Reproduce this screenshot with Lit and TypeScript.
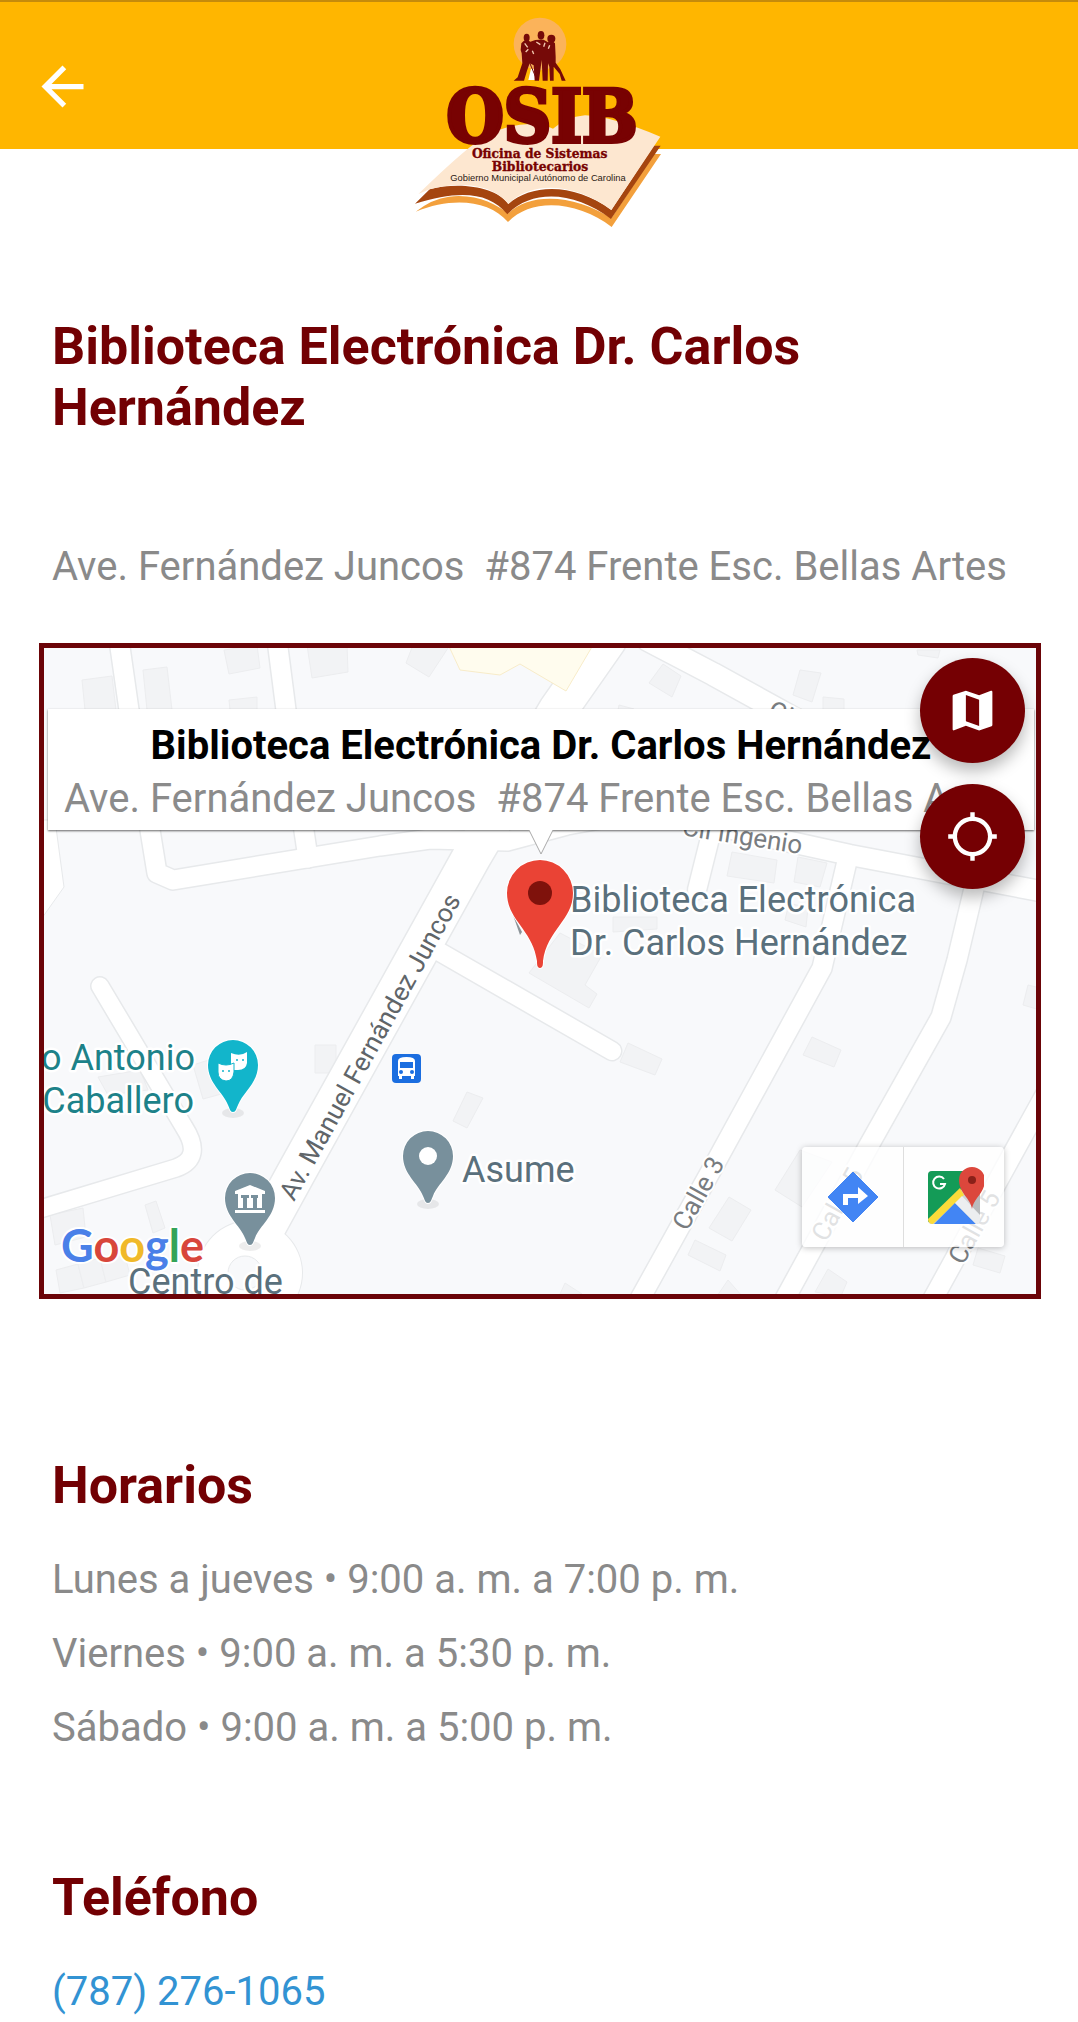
import { LitElement, html, svg, css } from "lit";
import { customElement, property } from "lit/decorators.js";

const PLACE = "Biblioteca Electrónica Dr. Carlos Hernández";
const ADDRESS = "Ave. Fernández Juncos\u00a0 #874 Frente Esc. Bellas Artes";
const HOURS = [
  "Lunes a jueves • 9:00 a. m. a 7:00 p. m.",
  "Viernes • 9:00 a. m. a 5:30 p. m.",
  "Sábado • 9:00 a. m. a 5:00 p. m.",
];

/* Street centre lines with their widths, in map units. */
const ROADS: Array<[string, number]> = [
  ["M119 640 L129 710 L150 830 L157 873 L173 880 L380 846 L430 839 L507 841 L567 825 L640 812", 19],
  ["M277 640 L286 710 L308 858", 19],
  ["M607 640 L558 710 L472 856 L296 1173 L262 1235", 38],
  ["M438 951 L612 1051", 18],
  ["M100 986 L184 1127 Q204 1158 176 1168 L30 1212", 17],
  ["M648 640 L713 674 L800 722", 22],
  ["M640 812 L700 822 L850 855 L1045 892", 20],
  ["M714 822 L697 890", 18],
  ["M848 857 L822 968 L717 1160 L636 1306", 19],
  ["M976 880 L957 960 L941 1017 L868 1147 L781 1306", 19],
  ["M1050 1086 L929 1306", 19],
];

const BUILDINGS = [
  "82,680 112,676 116,710 85,710",
  "143,670 167,667 172,710 147,710",
  "224,650 257,645 260,668 229,674",
  "229,700 257,697 257,710 230,710",
  "307,645 347,645 348,672 312,678",
  "413,645 450,645 429,677 406,663",
  "663,664 681,676 672,697 649,683",
  "800,670 821,673 812,702 793,695",
  "823,697 844,699 844,710 823,710",
  "917,650 940,650 938,658 918,655",
  "619,705 634,709 634,715 617,715",
  "732,852 777,860 774,883 727,876",
  "798,857 827,863 820,887 794,882",
  "789,903 808,908 806,927 785,920",
  "613,917 657,917 657,929 613,932",
  "560,933 602,955 585,985 597,994 589,1008 529,973",
  "628,1043 662,1059 655,1075 620,1062",
  "467,1092 483,1098 467,1128 453,1121",
  "695,1240 726,1255 720,1271 688,1255",
  "565,1283 582,1294 560,1294",
  "729,1197 751,1210 732,1241 709,1228",
  "812,1037 841,1050 834,1067 803,1055",
  "800,1150 832,1162 802,1207 775,1190",
  "828,1269 847,1282 841,1296 815,1292",
  "978,1248 1005,1256 1000,1273 973,1265",
  "1028,985 1040,988 1040,1010 1023,1005",
  "728,1280 742,1296 717,1296",
  "315,1045 336,1045 336,1073 315,1073",
  "193,1065 215,1058 225,1093 203,1099",
  "98,1077 140,1070 148,1090 108,1095",
  "50,1215 83,1208 86,1237 55,1245",
  "145,1205 156,1201 165,1228 153,1233",
  "56,1270 78,1264 84,1288 60,1293",
  "78,1264 100,1258 106,1282 84,1288",
  "100,1258 124,1252 130,1275 106,1282",
];

@customElement("osib-logo")
export class OsibLogo extends LitElement {
  static styles = css`
    :host {
      display: block;
    }
    .art {
      display: block;
      width: 280px;
      height: 240px;
    }
    .name,
    .office {
      font-family: "DejaVu Serif Condensed", "DejaVu Serif", serif;
      font-weight: 700;
      fill: #780202;
      stroke: #780202;
      stroke-linejoin: miter;
      text-anchor: middle;
    }
    .name {
      font-size: 219px;
      stroke-width: 12px;
    }
    .office {
      font-size: 41px;
      stroke-width: 1px;
    }
    .town {
      font: 28px "Liberation Sans", Arial, sans-serif;
      fill: #2b1a14;
      text-anchor: middle;
    }
  `;

  render() {
    return html`
      <svg class="art" viewBox="0 0 840 720" role="img" aria-label="OSIB">
        <path d="M50 635 Q100 596 150 590 C230 580 290 612 328 640 C400 570 540 590 637 655 L765 462 L786 462 L638 681 C540 605 400 590 327 666 C270 600 160 590 50 635Z" fill="#f3a03c" />
        <path d="M48 611 L92 568 C180 545 290 560 328 612 C400 548 530 550 637 630 L764 437 L785 437 L636 657 C530 575 400 565 325 643 C270 575 180 570 48 611Z" fill="#a5450f" />
        <path d="M58 582 Q150 492 214 440 Q280 392 330 380 Q410 362 462 386 Q500 352 558 346 Q640 350 784 410 L637 630 C530 550 400 540 328 612 C280 548 170 545 92 568 Z" fill="#fde7d0" />
        <circle cx="423" cy="132" r="79" fill="#fbb35a" />
        <path d="M388 240 L396 206 L405 208 L414 240Z" fill="#fff" />
        <g fill="#760a08">
          <ellipse cx="383" cy="113" rx="9" ry="12" />
          <ellipse cx="426" cy="106" rx="10" ry="13" />
          <ellipse cx="457" cy="116" rx="12" ry="12" />
          <path d="M374 123 Q384 118 394 125 L409 120 L420 119 L434 119 L447 127 Q460 120 468 130 L470 170 L470 188 L484 208 L500 242 L488 242 L482 222 L464 200 L464 242 L453 242 L451 200 L447 190 L446 242 L431 242 L428 180 L420 242 L407 242 L404 196 L392 190 L384 212 L375 242 L344 242 L356 232 L370 190 L368 160 L365 150 L367 130Z" />
          <path d="M390 184 L413 238" stroke="#760a08" stroke-width="3" />
        </g>
        <path d="M377 130 L386 142 M412 126 L424 134 M380 156 L388 148 M400 152 L404 162 M438 128 L434 140 M452 136 L448 146" stroke="#f2c9b0" stroke-width="4" fill="none" />
        <text class="name" x="429" y="425">OSIB</text>
        <text class="office" x="422" y="475">Oficina de Sistemas</text>
        <text class="office" x="423" y="513">Bibliotecarios</text>
        <text class="town" x="417" y="542">Gobierno Municipal Autónomo de Carolina</text>
      </svg>
    `;
  }
}

@customElement("place-map")
export class PlaceMap extends LitElement {
  @property() name = "";
  @property() address = "";

  static styles = css`
    :host {
      display: block;
      position: relative;
      overflow: hidden;
      border: 5px solid #6b0408;
      background: #f8f9fb;
    }
    .ground {
      display: block;
      width: 100%;
      height: 646px;
    }
    .casing,
    .road {
      fill: none;
      stroke-linecap: round;
      stroke-linejoin: round;
    }
    .casing {
      stroke: #e7e9eb;
    }
    .road {
      stroke: #fff;
    }
    .building {
      fill: #f2f3f5;
      stroke: #ecedef;
    }
    .poi,
    .street {
      font-family: Roboto, sans-serif;
      stroke: #fff;
      stroke-linejoin: round;
      paint-order: stroke;
    }
    .poi {
      font-size: 36px;
      fill: #5a707c;
      stroke-width: 5px;
    }
    .teal {
      fill: #1d8289;
    }
    .street {
      font-size: 26px;
      fill: #787c80;
      stroke-width: 4px;
    }
    .dark {
      fill: #606569;
    }
    .google {
      font: 700 45px Lato, sans-serif;
      stroke: #fff;
      stroke-width: 4px;
      stroke-linejoin: round;
      paint-order: stroke;
    }
    .callout {
      position: absolute;
      top: 61px;
      left: 4px;
      right: 2px;
      display: flex;
      flex-direction: column;
      align-items: center;
      gap: 6px;
      padding: 13px 0 8px;
      background: #fff;
      box-shadow: 0 1px 2px rgba(0, 0, 0, 0.6);
      font: 40px/47px Roboto, sans-serif;
      color: #8b8b8b;
      white-space: nowrap;
    }
    .title {
      font-weight: 700;
      color: #000;
    }
    .snippet {
      align-self: stretch;
      margin: 0 34px 0 16px;
      overflow: hidden;
      text-overflow: ellipsis;
    }
    .tail {
      position: absolute;
      top: 100%;
      left: 50%;
      width: 26px;
      height: 25px;
      margin-left: -13px;
    }
    .actions {
      position: absolute;
      top: 10px;
      right: 11px;
      display: flex;
      flex-direction: column;
      gap: 21px;
    }
    .round {
      display: grid;
      place-items: center;
      width: 105px;
      height: 105px;
      padding: 0;
      border: 0;
      border-radius: 50%;
      background: #750003;
      box-shadow: 0 8px 16px rgba(0, 0, 0, 0.28);
    }
    .round svg {
      width: 53px;
      height: 53px;
      fill: #fff;
    }
    .toolbar {
      position: absolute;
      right: 32px;
      bottom: 47px;
      display: flex;
      border-radius: 4px;
      background: rgba(255, 255, 255, 0.78);
      box-shadow: 0 1px 6px rgba(0, 0, 0, 0.25);
    }
    .tool {
      display: grid;
      place-items: center;
      width: 101px;
      height: 100px;
      padding: 0;
      border: 0;
      background: none;
    }
    .tool + .tool {
      border-left: 1px solid #dedede;
    }
    .tool svg {
      width: 60px;
      height: 60px;
    }
  `;

  private pin(x: number, y: number, color: string) {
    return svg`
      <g transform="translate(${x} ${y})">
        <ellipse cx="0" cy="48" rx="11" ry="5" fill="#000" opacity=".07" />
        <path d="M0 47 C-3 47 -3 44 -5 40 C-10 27 -25 18 -25 0 A25 25 0 0 1 25 0 C25 18 10 27 5 40 C3 44 3 47 0 47Z" fill=${color} stroke="#fff" stroke-width="2" paint-order="stroke" />
      </g>`;
  }

  render() {
    return html`
      <svg class="ground" viewBox="44 648 992 646" preserveAspectRatio="xMidYMid slice" role="img" aria-label="Mapa">
        <rect x="-2000" y="0" width="6000" height="3000" fill="#f8f9fb" />
        ${BUILDINGS.map((p) => svg`<polygon class="building" points=${p} />`)}
        ${ROADS.map(([d, w]) => svg`<path class="casing" d=${d} stroke-width=${w + 3} />`)}
        <circle cx="250" cy="1273" r="53" fill="#e7e9eb" />
        <path d="M30 820 L55 820 L64 887 L30 935" fill="#fff" stroke="#e7e9eb" />
        ${ROADS.map(([d, w]) => svg`<path class="road" d=${d} stroke-width=${w} />`)}
        <circle cx="250" cy="1273" r="52" fill="#fff" />
        <circle cx="245" cy="1273" r="17" fill="#f8f9fb" stroke="#e7e9eb" />
        <path d="M446 640 L460 670 L500 675 L520 664 L566 691 L596 640Z" fill="#fffcee" stroke="#f8ecc9" />

        <text class="street dark" transform="translate(294 1202) rotate(-61)">Av. Manuel Fernández Juncos</text>
        <text class="street" transform="translate(687 1232) rotate(-61)">Calle 3</text>
        <text class="street" transform="translate(826 1243) rotate(-61)">Calle 5</text>
        <text class="street" transform="translate(963 1266) rotate(-61)">Calle 5</text>
        <text class="street" text-anchor="end" transform="translate(801 854) rotate(9)">Cll Ingenio</text>
        <text class="street" transform="translate(766 716) rotate(26)">Cll</text>

        <text class="poi" x="570" y="912">Biblioteca Electrónica</text>
        <text class="poi" x="570" y="955">Dr. Carlos Hernández</text>
        <text class="poi" x="462" y="1182">Asume</text>
        <text class="poi teal" text-anchor="end" x="195" y="1070">o Antonio</text>
        <text class="poi teal" text-anchor="end" x="194" y="1113">Caballero</text>

        ${this.pin(233, 1065, "#12b5cb")}
        <g fill="#fff">
          <path d="M231 1053 Q240 1057 247 1052 V1063 Q246 1070 238 1070 H231Z" />
          <path d="M218 1063 Q226 1067 234 1063 V1072 Q233 1081 226 1081 Q218 1080 218 1072Z" stroke="#12b5cb" stroke-width="1" />
        </g>
        <g fill="#12b5cb">
          <circle cx="223" cy="1071" r="1" />
          <circle cx="229" cy="1071" r="1" />
          <circle cx="243" cy="1060" r="1" />
          <circle cx="237" cy="1060" r="1" />
        </g>

        ${this.pin(428, 1156, "#78909c")}
        <circle cx="428" cy="1156" r="9" fill="#fff" />

        <text class="poi" x="128" y="1294">Centro de</text>
        ${this.pin(250, 1198, "#78909c")}
        <path d="M235 1194 V1191 L250 1185 L265 1191 V1194 H262 V1208 H257 V1198 H258 V1195 H251 V1198 H253 V1208 H247 V1198 H249 V1195 H241 V1198 H243 V1208 H238 V1194Z M235 1210 H265 V1213 H235Z" fill="#fff" />

        <rect x="392" y="1054" width="29" height="29" rx="4" fill="#1b6ee0" />
        <path d="M398 1061 Q398 1057 406.500 1057 Q415 1057 415 1061 V1076 H414 V1079 H411 V1076 H402 V1079 H399 V1076 H398Z" fill="#fff" />
        <path d="M400 1062 H413 V1068 H400Z" fill="#1b6ee0" />
        <circle cx="401" cy="1072" r="2" fill="#1b6ee0" />
        <circle cx="412" cy="1072" r="2" fill="#1b6ee0" />

        <path d="M513 915 L522 932 L520 935Z" fill="#8d9498" />
        <path d="M540 968 C537 968 537 964 537 961 C533 930 507 920 507 893 A33 33 0 0 1 573 893 C573 920 547 930 543 961 C543 964 543 968 540 968Z" fill="#ea4335" stroke="#fff" stroke-width="2" paint-order="stroke" />
        <circle cx="540" cy="893" r="12" fill="#7f120c" />

        <text class="google" x="61" y="1262"><tspan fill="#4a80e8">G</tspan><tspan fill="#d8463b">o</tspan><tspan fill="#f0b92a">o</tspan><tspan fill="#4a80e8">g</tspan><tspan fill="#34a457">l</tspan><tspan fill="#d8463b">e</tspan></text>
      </svg>

      <div class="callout">
        <strong class="title">${this.name}</strong>
        <span class="snippet">${this.address}</span>
        <svg class="tail" viewBox="0 0 26 25" aria-hidden="true">
          <path d="M1 0 L13 24 L25 0" fill="#fff" stroke="#a9a9a9" />
        </svg>
      </div>

      <div class="toolbar">
        <button class="tool" type="button" aria-label="Cómo llegar">
          <svg viewBox="0 0 60 60" aria-hidden="true">
            <path d="M30 5 L55 30 L30 55 L5 30Z" fill="#4285f4" stroke="#4285f4" stroke-linejoin="round" />
            <path d="M20 38 V27 H35 V20 L45 29 L35 37 V31 H25 V38Z" fill="#fff" />
          </svg>
        </button>
        <button class="tool" type="button" aria-label="Abrir en Google Maps">
          <svg viewBox="0 0 60 60" aria-hidden="true">
            <rect x="4" y="4" width="52" height="53" rx="4" fill="#d0d2d4" />
            <path d="M56 20 V53 L45 42Z" fill="#b9bbbd" />
            <path d="M8 4 H46 L40 20 L5 55 Q4 55 4 53 V8 Q4 4 8 4Z" fill="#149b57" />
            <path d="M36 21 L4 52 Q4 57 9 57 L40 28Z" fill="#fbdb3a" />
            <path d="M31 36 L10 57 H52Z" fill="#4285f4" />
            <path d="M38 29 L31 36 L52 57 Q56 57 56 53 V48Z" fill="#eceef0" />
            <path d="M20 12 A6 6 0 1 0 21 17 H16" fill="none" stroke="#fff" stroke-width="2" />
            <path d="M48 42 C47 32 35 26 35 13 A13 13 0 0 1 61 13 C61 26 49 32 48 42Z" fill="#dc473c" />
            <circle cx="48" cy="13" r="4" fill="#8a2019" />
          </svg>
        </button>
      </div>

      <div class="actions">
        <button class="round" type="button" aria-label="Tipo de mapa">
          <svg viewBox="0 0 24 24" aria-hidden="true">
            <path d="M20.500 3l-.160.030L15 5.100 9 3 3.360 4.900c-.210.070-.360.250-.360.480V20.500c0 .280.220.500.500.500l.160-.030L9 18.900l6 2.100 5.640-1.900c.210-.070.360-.250.360-.480V3.500c0-.280-.220-.500-.500-.500zM15 19l-6-2.110V5l6 2.110V19z" />
          </svg>
        </button>
        <button class="round" type="button" aria-label="Centrar ubicación">
          <svg viewBox="0 0 24 24" aria-hidden="true">
            <path d="M20.940 11c-.460-4.170-3.770-7.480-7.940-7.940V1h-2v2.060C6.830 3.520 3.520 6.830 3.060 11H1v2h2.060c.460 4.170 3.770 7.480 7.940 7.940V23h2v-2.060c4.170-.460 7.480-3.770 7.940-7.940H23v-2h-2.060zM12 19c-3.870 0-7-3.130-7-7s3.130-7 7-7 7 3.130 7 7-3.130 7-7 7z" />
          </svg>
        </button>
      </div>
    `;
  }
}

@customElement("app-root")
export class AppRoot extends LitElement {
  static styles = css`
    :host {
      display: block;
      background: #fff;
      font-family: Roboto, sans-serif;
      color: #8a8a8a;
    }
    .bar {
      box-sizing: border-box;
      display: grid;
      grid-template-columns: 1fr auto 1fr;
      align-items: start;
      height: 149px;
      border-top: 2px solid #c58b0b;
      background: #ffb600;
    }
    .back {
      display: block;
      width: 63px;
      height: 63px;
      margin: 53px 31px 0;
      padding: 0;
      border: 0;
      background: none;
    }
    .back svg {
      display: block;
      fill: #fff;
    }
    .logo {
      margin-top: -2px;
    }
    .page {
      display: flex;
      flex-direction: column;
      padding: 167px 37px 6px 39px;
    }
    .text {
      padding: 0 13px;
    }
    h1,
    h2,
    p,
    ul {
      margin: 0;
    }
    h1,
    h2 {
      font-size: 52px;
      line-height: 61px;
      font-weight: 700;
      color: #720003;
    }
    .text,
    .hours {
      font-size: 40px;
      line-height: 47px;
    }
    .intro {
      display: flex;
      flex-direction: column;
      gap: 105px;
      margin-bottom: 53px;
    }
    .schedule {
      margin-top: 156px;
    }
    .phone {
      margin-top: 116px;
    }
    .block {
      display: flex;
      flex-direction: column;
      align-items: flex-start;
      gap: 40px;
    }
    .hours {
      display: flex;
      flex-direction: column;
      gap: 27px;
      padding: 0;
      list-style: none;
    }
    .tel {
      color: #3293d3;
      text-decoration: none;
    }
  `;

  render() {
    return html`
      <header class="bar">
        <button class="back" type="button" aria-label="Volver">
          <svg viewBox="0 0 24 24" aria-hidden="true">
            <path d="M20 11H7.830l5.590-5.590L12 4l-8 8 8 8 1.410-1.410L7.830 13H20v-2z" />
          </svg>
        </button>
        <osib-logo class="logo"></osib-logo>
      </header>
      <main class="page">
        <section class="text intro">
          <h1>${PLACE}</h1>
          <p>${ADDRESS}</p>
        </section>
        <place-map .name=${PLACE} .address=${ADDRESS}></place-map>
        <section class="text block schedule">
          <h2>Horarios</h2>
          <ul class="hours">
            ${HOURS.map((row) => html`<li>${row}</li>`)}
          </ul>
        </section>
        <section class="text block phone">
          <h2>Teléfono</h2>
          <a class="tel" href="tel:+17872761065">(787) 276-1065</a>
        </section>
      </main>
    `;
  }
}
